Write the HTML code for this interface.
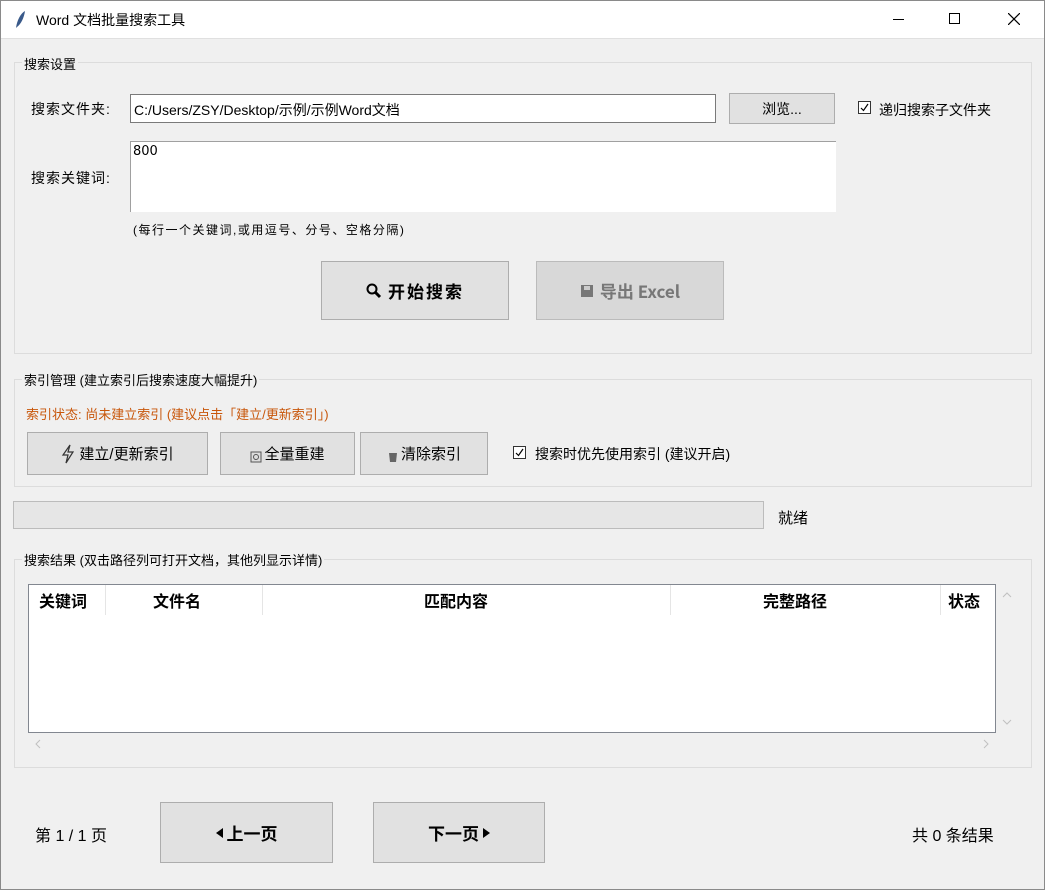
<!DOCTYPE html>
<html><head><meta charset="utf-8"><style>
*{box-sizing:border-box;margin:0;padding:0}
body{width:1045px;height:890px;background:#f0f0f0;font-family:"Liberation Sans","Microsoft YaHei","Noto Sans CJK SC",sans-serif;font-size:14px;color:#000;position:relative;overflow:hidden}
.a{position:absolute;white-space:nowrap}
.frame{position:absolute;border:1px solid #dcdcdc}
.lg{position:absolute;background:#f0f0f0;padding:0 2px;font-size:13px}
.btn{position:absolute;background:#e1e1e1;border:1px solid #adadad;display:flex;align-items:center;justify-content:center}
.cb{position:absolute;width:13px;height:13px;border:1px solid #333;background:#fff}
.b{font-weight:bold;font-family:"Noto Sans CJK SC",sans-serif}
</style></head><body>
<div class="a" style="left:0;top:0;width:1045px;height:39px;background:#fff;border-bottom:1px solid #e0e0e0"></div>
<svg class="a" style="left:13px;top:10px" width="14" height="20"><path d="M3 18 C4 10 8 3 12 1 C11 8 8 14 4 17 Z" fill="#3a5a8a"/></svg>
<div class="a" style="left:36px;top:10px;font-size:14px">Word 文档批量搜索工具</div>
<div class="a" style="left:893px;top:19px;width:11px;height:1px;background:#000"></div>
<div class="a" style="left:949px;top:13px;width:11px;height:11px;border:1px solid #000"></div>
<svg class="a" style="left:1008px;top:13px" width="12" height="12"><path d="M0 0L12 12M12 0L0 12" stroke="#000" stroke-width="1.2"/></svg>

<div class="frame" style="left:14px;top:62px;width:1018px;height:292px"></div>
<div class="lg" style="left:22px;top:54px">搜索设置</div>
<div class="a" style="left:31px;top:99px;letter-spacing:1px">搜索文件夹:</div>
<div class="a" style="left:130px;top:94px;width:586px;height:29px;background:#fff;border:1px solid #7a7a7a;padding:5px 3px;font-size:14px">C:/Users/ZSY/Desktop/示例/示例Word文档</div>
<div class="btn" style="left:729px;top:93px;width:106px;height:31px">浏览...</div>
<div class="cb" style="left:858px;top:101px"><svg width="11" height="11" style="position:absolute;left:0;top:0"><path d="M2 6L4.5 8.5L9 2" stroke="#000" fill="none" stroke-width="1.2"/></svg></div>
<div class="a" style="left:879px;top:100px">递归搜索子文件夹</div>
<div class="a" style="left:31px;top:168px;letter-spacing:1px">搜索关键词:</div>
<div class="a" style="left:130px;top:141px;width:706px;height:71px;background:#fff;border-top:1px solid #a0a0a0;border-left:1px solid #a0a0a0;padding:2px 2px;font-family:'DejaVu Sans',sans-serif;font-size:13px">800</div>
<div class="a" style="left:133px;top:221px;font-size:12px;letter-spacing:1.5px">(每行一个关键词,或用逗号、分号、空格分隔)</div>
<div class="btn b" style="left:321px;top:261px;width:188px;height:59px;font-size:17px;letter-spacing:2px"><svg width="16" height="16" style="margin-right:6px"><circle cx="6" cy="6" r="4.5" stroke="#000" stroke-width="2" fill="none"/><path d="M9 9L14 14" stroke="#000" stroke-width="3"/></svg>开始搜索</div>
<div class="btn b" style="left:536px;top:261px;width:188px;height:59px;font-size:17px;color:#777;border-color:#bbb;background:#d8d8d8"><svg width="14" height="14" style="margin-right:6px"><rect x="1" y="1" width="12" height="12" fill="#777"/><rect x="4" y="2" width="6" height="4" fill="#ccc"/></svg>导出 Excel</div>

<div class="frame" style="left:14px;top:379px;width:1018px;height:108px"></div>
<div class="lg" style="left:22px;top:370px">索引管理 (建立索引后搜索速度大幅提升)</div>
<div class="a" style="left:26px;top:404px;color:#c8560a;font-size:13px">索引状态: 尚未建立索引 (建议点击「建立/更新索引」)</div>
<div class="btn" style="left:27px;top:432px;width:181px;height:43px;font-size:15px"><svg width="14" height="20" style="margin-right:4px"><path d="M9 1L2 11H7L5 19L12 8H7Z" stroke="#333" fill="none" stroke-width="1.2"/></svg>建立/更新索引</div>
<div class="btn" style="left:220px;top:432px;width:135px;height:43px;font-size:15px"><svg width="12" height="12" style="margin-right:2px;margin-top:6px"><rect x="1" y="1" width="10" height="10" stroke="#555" fill="#ddd"/><circle cx="6" cy="6" r="2.5" stroke="#555" fill="none"/></svg>全量重建</div>
<div class="btn" style="left:360px;top:432px;width:128px;height:43px;font-size:15px"><svg width="12" height="12" style="margin-right:2px;margin-top:6px"><path d="M2 2H10L9 11H3Z" fill="#666"/></svg>清除索引</div>
<div class="cb" style="left:513px;top:446px"><svg width="11" height="11" style="position:absolute;left:0;top:0"><path d="M2 6L4.5 8.5L9 2" stroke="#000" fill="none" stroke-width="1.2"/></svg></div>
<div class="a" style="left:535px;top:444px;font-size:14px">搜索时优先使用索引 (建议开启)</div>

<div class="a" style="left:13px;top:501px;width:751px;height:28px;background:#e6e6e6;border:1px solid #bcbcbc"></div>
<div class="a" style="left:778px;top:507px;font-size:15px">就绪</div>

<div class="frame" style="left:14px;top:559px;width:1018px;height:209px"></div>
<div class="lg" style="left:22px;top:550px">搜索结果 (双击路径列可打开文档，其他列显示详情)</div>
<div class="a" style="left:28px;top:584px;width:968px;height:149px;background:#fff;border:1px solid #828790"></div>
<div class="a b" style="left:29px;top:585px;width:966px;height:30px;font-size:16px">
<span class="a" style="left:10px;top:3px">关键词</span><span class="a" style="left:124px;top:3px">文件名</span><span class="a" style="left:395px;top:3px">匹配内容</span><span class="a" style="left:734px;top:3px">完整路径</span><span class="a" style="left:919px;top:3px">状态</span>
<span class="a" style="left:76px;top:0;width:1px;height:30px;background:#e5e5e5"></span><span class="a" style="left:233px;top:0;width:1px;height:30px;background:#e5e5e5"></span><span class="a" style="left:641px;top:0;width:1px;height:30px;background:#e5e5e5"></span><span class="a" style="left:911px;top:0;width:1px;height:30px;background:#e5e5e5"></span></div>
<svg class="a" style="left:1002px;top:592px" width="10" height="6"><path d="M1 5L5 1L9 5" stroke="#c0c0c0" fill="none"/></svg>
<svg class="a" style="left:1002px;top:719px" width="10" height="6"><path d="M1 1L5 5L9 1" stroke="#c0c0c0" fill="none"/></svg>
<svg class="a" style="left:35px;top:739px" width="6" height="10"><path d="M5 1L1 5L5 9" stroke="#c0c0c0" fill="none"/></svg>
<svg class="a" style="left:983px;top:739px" width="6" height="10"><path d="M1 1L5 5L1 9" stroke="#c0c0c0" fill="none"/></svg>

<div class="a" style="left:35px;top:822px;font-size:16px">第 1 / 1 页</div>
<div class="btn b" style="left:160px;top:802px;width:173px;height:61px;font-size:17px"><svg width="8" height="10" style="margin-right:3px"><path d="M7 0V10L0 5Z" fill="#000"/></svg>上一页</div>
<div class="btn b" style="left:373px;top:802px;width:172px;height:61px;font-size:17px">下一页<svg width="8" height="10" style="margin-left:3px"><path d="M1 0V10L8 5Z" fill="#000"/></svg></div>
<div class="a" style="left:912px;top:822px;font-size:16px">共 0 条结果</div>
<div class="a" style="left:0;top:0;width:1045px;height:890px;border:1px solid #8a8a8a;pointer-events:none"></div>
</body></html>
